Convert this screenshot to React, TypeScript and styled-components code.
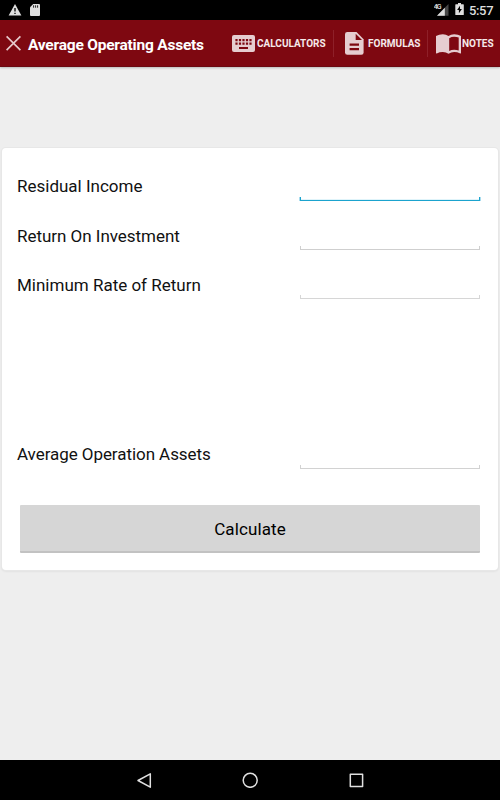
import React from "react";
import styled, { createGlobalStyle } from "styled-components";

const GlobalStyle = createGlobalStyle`
  * { box-sizing: border-box; }
  body { margin: 0; background: #eee; font-family: Roboto, sans-serif; }
  svg { display: block; flex: none; }
`;

const Screen = styled.div`
  width: 500px;
  height: 800px;
  display: flex;
  flex-direction: column;
  background: #eeeeee;
  overflow: hidden;
`;

const StatusBar = styled.div`
  height: 20px;
  flex: none;
  background: #000;
  display: flex;
  align-items: center;
  padding: 0 7px 0 8px;
`;

const Spacer = styled.div`
  flex: 1;
`;

const Clock = styled.span`
  color: #dedede;
  font-size: 13px;
  font-weight: 500;
  line-height: 20px;
  margin: 1px 0 0 5px;
  width: 24px;
  white-space: nowrap;
  letter-spacing: -0.35px;
`;

const AppBar = styled.header`
  height: 47px;
  flex: none;
  background: #7e0811;
  border-bottom: 1px solid #6b0a12;
  box-shadow: 0 1px 2px rgba(0, 0, 0, 0.22);
  display: flex;
  align-items: center;
  padding-left: 6px;
`;

const Title = styled.h1`
  margin: 3px 0 0 7px;
  width: 204px;
  color: #fff;
  font-size: 15.5px;
  line-height: 20px;
  font-weight: 700;
  letter-spacing: -0.22px;
  white-space: nowrap;
`;

const Action = styled.div<{ $width: number; $gap: number }>`
  width: ${(p) => p.$width}px;
  flex: none;
  display: flex;
  align-items: center;
  gap: ${(p) => p.$gap}px;
`;

const ActionText = styled.span`
  margin-top: 2px;
  color: #f5e9ea;
  font-size: 10px;
  line-height: 14px;
  font-weight: 700;
  white-space: nowrap;
`;

const Divider = styled.div<{ $gap: number }>`
  width: 1px;
  height: 27px;
  flex: none;
  background: #8e2029;
  margin-right: ${(p) => p.$gap}px;
`;

const Content = styled.main`
  flex: 1;
  padding: 81px 2px 0;
`;

const Card = styled.section`
  height: 422px;
  background: #fff;
  border-radius: 4px;
  box-shadow: 0 0 0 1px #e7e7e7, 0 1px 2px 1px rgba(0, 0, 0, 0.05);
  padding: 14px 18px 0 15px;
`;

const Row = styled.label<{ $height: number }>`
  height: ${(p) => p.$height}px;
  display: flex;
  justify-content: space-between;
`;

const LabelText = styled.span<{ $tracking: number; $line: number }>`
  color: #111;
  font-size: 17px;
  line-height: ${(p) => p.$line}px;
  letter-spacing: ${(p) => p.$tracking}px;
  white-space: nowrap;
`;

const Field = styled.span<{ $tone: string; $focused?: boolean }>`
  width: 180px;
  height: 4px;
  margin-top: 35px;
  border: 1px solid ${(p) => p.$tone};
  border-top: 0;
  box-shadow: ${(p) =>
    p.$focused ? "-1px 0 #a9dcee, 1px 0 #a9dcee, inset 0 -1px #e0f4fa" : "none"};
`;

const Button = styled.button`
  display: block;
  width: 460px;
  height: 48px;
  margin: 26px 0 0 3px;
  padding: 1px 0 0;
  border: 0;
  border-bottom: 2px solid #c2c2c2;
  border-radius: 1px;
  background: #d6d6d6;
  color: #000;
  font: 400 17px/47px Roboto, sans-serif;
  letter-spacing: 0.1px;
`;

const NavBar = styled.nav`
  height: 40px;
  flex: none;
  background: #000;
  display: flex;
  align-items: center;
  justify-content: center;
  gap: 90px;
`;

const StatusIcons = styled.div<{ $gap: number }>`
  display: flex;
  align-items: center;
  gap: ${(p) => p.$gap}px;
`;

const WarningIcon = () => (
  <svg width="14" height="20" viewBox="0 0 14 20">
    <path d="M7 4 L13.4 15.5 H.6Z" fill="#dedede" />
    <path d="M7 8v3.6M7 12.7v1.4" stroke="#000" strokeWidth="1.3" />
  </svg>
);

const CardIcon = () => (
  <svg width="10" height="20" viewBox="0 0 10 20">
    <path d="M3.2 4H9a1 1 0 0 1 1 1v10a1 1 0 0 1-1 1H1a1 1 0 0 1-1-1V7.3Z" fill="#dedede" />
    <path d="M3.6 5.3v2.4M5.6 5.3v2.4M7.6 5.3v2.4" stroke="#222" />
  </svg>
);

const SignalIcon = () => (
  <svg width="15" height="20" viewBox="0 0 15 20">
    <path d="M14.5 4v11.7H3Z" fill="#484848" />
    <path d="M10.8 7.8v7.9H3Z" fill="#dedede" />
    <text x="-.2" y="9.4" fontSize="7" fontWeight="500" fontFamily="Roboto, sans-serif" fill="#e8e8e8" textLength="7.8">4G</text>
  </svg>
);

const BatteryIcon = () => (
  <svg width="9" height="20" viewBox="0 0 9 20">
    <path d="M3 3h3v1.2h2.2q.6 0 .6.6v9.6q0 .7-.6.7H.9q-.6 0-.6-.7V4.8q0-.6.6-.6H3Z" fill="#dedede" />
    <path d="M5 5.8 2.1 10h1.8v3.2L6.9 9H5Z" fill="#000" />
  </svg>
);

const CloseIcon = () => (
  <svg width="15" height="16" viewBox="0 0 15 16">
    <path d="m.6 1.4 13.8 13.8M14.4 1.4.6 15.2" fill="none" stroke="#e6c9cc" strokeWidth="1.7" />
  </svg>
);

const KeyboardIcon = () => (
  <svg width="23" height="17" viewBox="0 0 23 17">
    <rect width="23" height="17" rx="2" fill="#e6cdd0" />
    <path
      d="M3.4 5.1h2.2m1.3 0h2.2m1.3 0h2.2m1.3 0h2.2m1.3 0h2.2M3.4 8.6h2.2m1.3 0h2.2m1.3 0h2.2m1.3 0h2.2m1.3 0h2.2M7 13h9"
      stroke="#7e0811"
      strokeWidth="2.1"
    />
  </svg>
);

const DocumentIcon = () => (
  <svg width="19" height="23" viewBox="0 0 19 23">
    <path d="M2.3 0H11.5L18.6 7.2V20.6q0 2.2-2.2 2.2H2.3Q0 22.8 0 20.6V2.2Q0 0 2.3 0Z" fill="#e6cdd0" />
    <path d="M10.7 1.7v6.2H17Z" fill="#7e0811" />
    <path d="M4.6 12.6H14M4.6 17.1H14" stroke="#7e0811" strokeWidth="2.1" />
  </svg>
);

const BookIcon = () => (
  <svg width="25" height="22" viewBox="0 -2 25 22">
    <path
      d="M12.5 1.9Q10.2.2 6.8.2 3.1.2 0 1.9V19q0 .6.8.4Q3.4 18 6.8 18q3.4 0 5.7 1.7 2.7-1.7 5.7-1.7 3.1 0 6 1.4.8.2.8-.4V1.9Q22.2.2 18.2.2q-3.4 0-5.7 1.7Z"
      fill="#e6cdd0"
    />
    <path d="M13.2 4.2q2.2-1.4 5-1.4 2.4 0 4.5.8v12.8q-2-.6-4.5-.6-2.8 0-5 1.2Z" fill="#7e0811" />
  </svg>
);

const NavIcon = ({ d }: { d: string }) => (
  <svg width="16" height="16" viewBox="0 0 16 16">
    <path d={d} fill="none" stroke="#e0e0e0" strokeWidth="1.5" strokeLinejoin="round" />
  </svg>
);

const fields = [
  { label: "Residual Income", tone: "#1ba3ce", height: 49, line: 49, tracking: 0, focused: true },
  { label: "Return On Investment", tone: "#cfcfcf", height: 49, line: 50, tracking: -0.03 },
  { label: "Minimum Rate of Return", tone: "#d6d6d6", height: 170, line: 51, tracking: 0 },
  { label: "Average Operation Assets", tone: "#d2d2d2", height: 49, line: 49, tracking: -0.06 },
];

export default function App() {
  return (
    <>
      <GlobalStyle />
      <Screen>
        <StatusBar>
          <StatusIcons $gap={8}>
            <WarningIcon />
            <CardIcon />
          </StatusIcons>
          <Spacer />
          <StatusIcons $gap={6}>
            <SignalIcon />
            <BatteryIcon />
          </StatusIcons>
          <Clock>5:57</Clock>
        </StatusBar>
        <AppBar>
          <CloseIcon />
          <Title>Average Operating Assets</Title>
          <Action $width={101} $gap={2}>
            <KeyboardIcon />
            <ActionText>CALCULATORS</ActionText>
          </Action>
          <Divider $gap={11} />
          <Action $width={82} $gap={4}>
            <DocumentIcon />
            <ActionText>FORMULAS</ActionText>
          </Action>
          <Divider $gap={8} />
          <Action $width={60} $gap={1}>
            <BookIcon />
            <ActionText>NOTES</ActionText>
          </Action>
        </AppBar>
        <Content>
          <Card>
            {fields.map((f) => (
              <Row key={f.label} $height={f.height}>
                <LabelText $tracking={f.tracking} $line={f.line}>{f.label}</LabelText>
                <Field $tone={f.tone} $focused={f.focused} />
              </Row>
            ))}
            <Button>Calculate</Button>
          </Card>
        </Content>
        <NavBar>
          <NavIcon d="M14.3 1.8v13.4L2 8.5Z" />
          <NavIcon d="M8.2 1.3a7 7 0 1 1 0 14A7 7 0 0 1 8.2 1.3Z" />
          <NavIcon d="M2.3 2.3h12.3v12.3H2.3Z" />
        </NavBar>
      </Screen>
    </>
  );
}
